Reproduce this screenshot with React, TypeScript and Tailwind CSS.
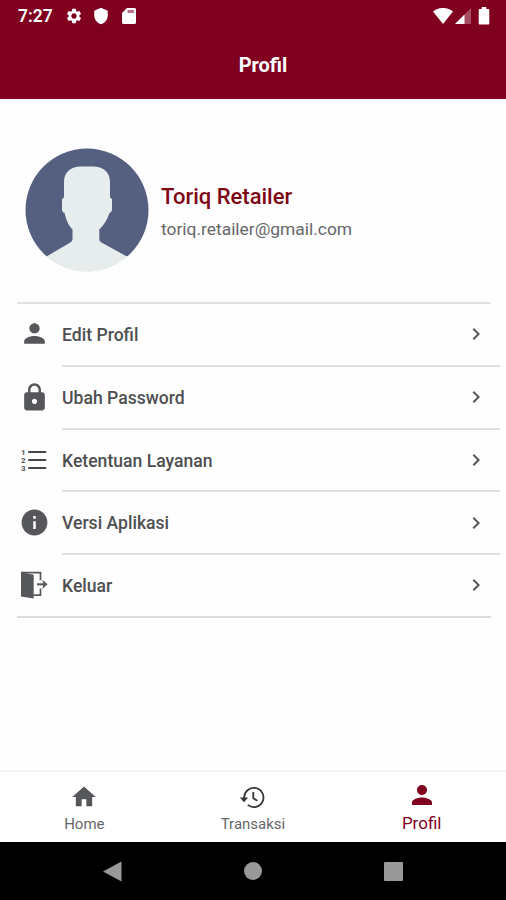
import React from "react";
import {
  MdSettings,
  MdShield,
  MdPerson,
  MdLock,
  MdInfo,
  MdHome,
  MdChevronRight,
} from "react-icons/md";

const BatteryIcon = () => (
  <svg width="12" height="18" viewBox="0 0 12 18" fill="currentColor">
    <path d="M3.700 0h4.600v2h2c.6 0 1 .4 1 1v13.500c0 .6-.4 1-1 1H1.700c-.6 0-1-.4-1-1V3c0-.6.4-1 1-1h2z" />
  </svg>
);

const SdCardIcon = () => (
  <svg width="14" height="16" viewBox="0 0 14 16" fill="currentColor">
    <path d="M5 0h7.500C13.300 0 14 .7 14 1.500v13c0 .8-.7 1.500-1.500 1.500h-11C.7 16 0 15.300 0 14.500V5z" />
    <path d="M5.500 2H12v3H5.500z" fill="#80001f" fillOpacity=".55" />
  </svg>
);

const ListIcon = () => (
  <svg width="28" height="24" viewBox="0 0 28 24">
    <g fill="#56575b" fontSize="8" fontWeight="700">
      <text x="1" y="6.500">1</text>
      <text x="1" y="14.700">2</text>
      <text x="1" y="22.700">3</text>
    </g>
    <path d="M8.200 4h18M8.200 12h18M8.200 20h18" stroke="#46474c" strokeWidth="2" />
  </svg>
);

const LogoutIcon = () => (
  <svg width="28" height="28" viewBox="0 0 28 28">
    <path d="M1 1.200l12.700 2.600V27.500L1 25.500z" fill="#56575b" />
    <path d="M1 1.700h19.500v7.500M20.500 17.500v6.700H13.500" fill="none" stroke="#56575b" strokeWidth="1.700" />
    <path d="M17 13.300h7" fill="none" stroke="#56575b" strokeWidth="2" />
    <path d="M22.300 8.700l5.300 4.600-5.300 4.600 1.200-4.600z" fill="#56575b" />
  </svg>
);

const HistoryIcon = () => (
  <svg width="27" height="23" viewBox="0 0 27 23">
    <g fill="none" stroke="#35363a" strokeWidth="1.800">
      <path d="M5.300 12.500a9.600 9.600 0 1 1 3.500 6.400" />
      <path d="M14.300 6v6.200l4 2.500" />
    </g>
    <path d="M.8 11.500h8.400l-4.200 4.800z" fill="#35363a" />
  </svg>
);

const Avatar = () => (
  <svg width="124" height="124" viewBox="0 0 124 124" className="shrink-0">
    <defs>
      <clipPath id="avatar-clip">
        <circle cx="62" cy="62" r="61.500" />
      </clipPath>
    </defs>
    <g clipPath="url(#avatar-clip)">
      <path d="M0 0h124v109H0z" fill="#556080" />
      <path d="M20 108h84v16H20z" fill="#e7eced" />
      <path
        d="M39 34C39 24 46 18.500 56 18.500h12C78 18.500 85 24 85 34v15.500l2 1.500v10c0 2-.8 3.500-2.500 4C82 72 79 77 74.300 81.500V91c0 1.500.7 2.700 2.200 3.600L101 108l6 4v14H17v-14l5.300-4 23-13.400c1.500-.9 2.200-2.100 2.200-3.600v-9.500C43 77 41.500 72 39.500 65c-1.700-.5-2.500-2-2.500-4V51l2-1.500z"
        fill="#e7eced"
      />
    </g>
  </svg>
);

const menuItems = [
  { label: "Edit Profil", icon: <MdPerson size={31} className="mb-[2px]" /> },
  { label: "Ubah Password", icon: <MdLock size={31} /> },
  { label: "Ketentuan Layanan", icon: <ListIcon /> },
  { label: "Versi Aplikasi", icon: <MdInfo size={31} /> },
  { label: "Keluar", icon: <LogoutIcon /> },
];

const App = () => {
  return (
    <div className="flex h-[900px] w-[506px] flex-col overflow-hidden bg-[#fefefe] font-['Roboto',sans-serif]">
      <header className="h-[99px] shrink-0 bg-[#80001f] text-white">
        <div className="flex h-8 items-center pr-[16px] pl-[18px]">
          <span className="w-[47px] text-[17.500px] font-semibold">7:27</span>
          <MdSettings size={18} />
          <MdShield size={18} className="ml-[9px]" />
          <span className="ml-[12px]">
            <SdCardIcon />
          </span>
          <div className="ml-auto flex items-center">
            <svg width="20" height="16" viewBox="0 0 20 16" fill="currentColor">
              <path d="M0 3.500C6-1.200 14-1.200 20 3.500L10 16z" />
            </svg>
            <svg width="16" height="16" viewBox="0 0 16 16" fill="currentColor" className="ml-[2px]">
              <path d="M16 0v16H0z" fillOpacity=".3" />
              <path d="M9.500 6.500V16H0z" />
            </svg>
            <span className="ml-[7px]">
              <BatteryIcon />
            </span>
          </div>
        </div>
        <h1 className="pt-[19px] pl-[20px] text-center text-[20px] leading-[28px] font-bold">Profil</h1>
      </header>

      <main className="flex-1">
        <section className="flex h-[203px] items-start pt-[49px] pl-[25px]">
          <Avatar />
          <div className="ml-[12px] pt-[35px]">
            <h2 className="text-[22px] leading-[28px] font-medium text-[#7d0715]">Toriq Retailer</h2>
            <p className="mt-[6px] text-[17.400px] leading-[24px] text-[#66676a]">
              toriq.retailer@gmail.com
            </p>
          </div>
        </section>

        <div className="mr-[15px] ml-[17px] h-[2px] bg-[#e2e2e2]" />
        <ul>
          {menuItems.map((item, i) => (
            <li key={item.label}>
              <div className="flex h-[60.750px] items-center text-[#56575b]">
                <span className="ml-[17px] flex w-[34px] justify-center">{item.icon}</span>
                <span className="ml-[11px] pt-[2px] text-[17.600px] font-medium text-[#4e4f53]">
                  {item.label}
                </span>
                <MdChevronRight size={24} className="mr-[18px] ml-auto" />
              </div>
              {i < menuItems.length - 1 && (
                <div className="mr-[6px] ml-[62px] h-[2px] bg-[#e0e0e0]" />
              )}
            </li>
          ))}
        </ul>
        <div className="mr-[15px] ml-[17px] h-[2px] bg-[#dcdcdc]" />
      </main>

      <nav className="grid h-[72px] shrink-0 grid-cols-3 border-t-2 border-[#f5f5f5] bg-white text-[15px] text-[#66676a]">
        <div className="flex flex-col items-center pt-[11px]">
          <MdHome size={28} color="#56575b" />
          <span className="mt-[3px] leading-[20px]">Home</span>
        </div>
        <div className="flex flex-col items-center pt-[14px]">
          <HistoryIcon />
          <span className="mt-[5px] leading-[20px]">Transaksi</span>
        </div>
        <div className="flex flex-col items-center pt-[8px] text-[#80001f]">
          <MdPerson size={30} />
          <span className="mt-[2px] text-[17px] leading-[22px]">Profil</span>
        </div>
      </nav>

      <footer className="flex h-[58px] shrink-0 items-center justify-between bg-black px-[103px] text-[#999]">
        <svg width="19" height="21" viewBox="0 0 19 21" fill="currentColor">
          <path d="M18.500.5v20L0 10.500z" />
        </svg>
        <span className="h-[18px] w-[18px] rounded-full bg-[#999]" />
        <span className="h-[19px] w-[19px] rounded-[1px] bg-[#999]" />
      </footer>
    </div>
  );
};

export default App;
